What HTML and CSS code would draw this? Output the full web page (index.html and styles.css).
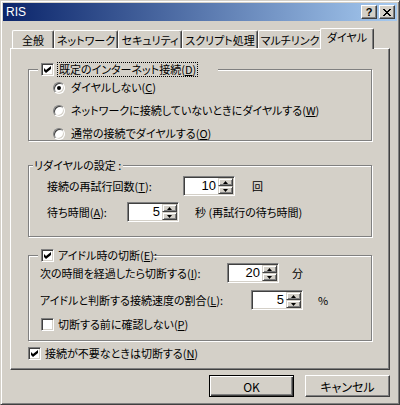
FILE: index.html
```html
<!DOCTYPE html>
<html lang="ja">
<head>
<meta charset="utf-8">
<title>RIS</title>
<link rel="stylesheet" href="styles.css">
</head>
<body>
<div class="window">
  <div class="titlebar">
    <span class="title">RIS</span>
    <div class="tbtns">
      <span class="tbtn help">?</span>
      <span class="tbtn close"><svg width="8" height="7" viewBox="0 0 8 7" shape-rendering="crispEdges"><path d="M0 0h2v1h1v1h2v-1h1v-1h2v1h-1v1h-1v1h-1v1h1v1h1v1h1v1h-2v-1h-1v-1h-2v1h-1v1h-2v-1h1v-1h1v-1h1v-1h-1v-1h-1v-1h-1z" fill="#000"/></svg></span>
    </div>
  </div>
  <div class="body">
    <div class="tabs">
      <div class="tab t1">全般</div>
      <div class="tab t2">ネットワーク</div>
      <div class="tab t3">セキュリティ</div>
      <div class="tab t4">スクリプト処理</div>
      <div class="tab t5">マルチリンク</div>
      <div class="tab t6 sel">ダイヤル</div>
    </div>
    <div class="panel">
      <div class="group g1">
        <div class="legend cblegend lg1">
          <span class="cb on"></span><span class="focus">既定のインターネット接続(<u>D</u>)</span>
        </div>
        <div class="rrow"><span class="rb on"></span><span>ダイヤルしない(<u>C</u>)</span></div>
        <div class="rrow"><span class="rb"></span><span>ネットワークに接続していないときにダイヤルする(<u>W</u>)</span></div>
        <div class="rrow"><span class="rb"></span><span>通常の接続でダイヤルする(<u>O</u>)</span></div>
      </div>

      <div class="group g2">
        <div class="legend lg2">リダイヤルの設定 :</div>
        <div class="frow r21">
          <span class="lbl l21">接続の再試行回数(<u>T</u>):</span>
          <span class="spin"><span class="val">10</span><span class="arrows"><span class="ab"><svg width="5" height="3" viewBox="0 0 5 3"><path d="M2.5 0L5 3H0z"/></svg></span><span class="ab"><svg width="5" height="3" viewBox="0 0 5 3"><path d="M0 0H5L2.5 3z"/></svg></span></span></span>
          <span class="unit u21">回</span>
        </div>
        <div class="frow r22">
          <span class="lbl l22">待ち時間(<u>A</u>):</span>
          <span class="spin"><span class="val">5</span><span class="arrows"><span class="ab"><svg width="5" height="3" viewBox="0 0 5 3"><path d="M2.5 0L5 3H0z"/></svg></span><span class="ab"><svg width="5" height="3" viewBox="0 0 5 3"><path d="M0 0H5L2.5 3z"/></svg></span></span></span>
          <span class="unit u22">秒 (再試行の待ち時間)</span>
        </div>
      </div>

      <div class="group g3">
        <div class="legend cblegend lg3">
          <span class="cb on"></span><span class="ltext">アイドル時の切断(<u>E</u>):</span>
        </div>
        <div class="frow r31">
          <span class="lbl l31">次の時間を経過したら切断する(<u>I</u>):</span>
          <span class="spin"><span class="val">20</span><span class="arrows"><span class="ab"><svg width="5" height="3" viewBox="0 0 5 3"><path d="M2.5 0L5 3H0z"/></svg></span><span class="ab"><svg width="5" height="3" viewBox="0 0 5 3"><path d="M0 0H5L2.5 3z"/></svg></span></span></span>
          <span class="unit u31">分</span>
        </div>
        <div class="frow r32">
          <span class="lbl l32">アイドルと判断する接続速度の割合(<u>L</u>):</span>
          <span class="spin"><span class="val">5</span><span class="arrows"><span class="ab"><svg width="5" height="3" viewBox="0 0 5 3"><path d="M2.5 0L5 3H0z"/></svg></span><span class="ab"><svg width="5" height="3" viewBox="0 0 5 3"><path d="M0 0H5L2.5 3z"/></svg></span></span></span>
          <span class="unit u32">%</span>
        </div>
        <div class="crow r33"><span class="cb"></span><span>切断する前に確認しない(<u>P</u>)</span></div>
      </div>

      <div class="crow last"><span class="cb on"></span><span>接続が不要なときは切断する(<u>N</u>)</span></div>
    </div>
    <div class="buttons">
      <div class="btn default">OK</div>
      <div class="btn">キャンセル</div>
    </div>
  </div>
</div>
</body>
</html>
```
FILE: styles.css
```css
* { box-sizing: border-box; }
html, body { margin: 0; padding: 0; }
body {
  width: 400px; height: 405px; overflow: hidden;
  background: #d4d0c8;
  font-family: "Noto Sans CJK JP", "Noto Sans", sans-serif;
  font-size: 11px; line-height: 13px; color: #000;
  font-feature-settings: "palt";
}
u { text-decoration: underline; text-underline-offset: 1px; }

.window {
  width: 400px; height: 405px;
  border: 1px solid; border-color: #d4d0c8 #404040 #404040 #d4d0c8;
  box-shadow: inset 1px 1px #fff, inset -1px -1px #808080;
  padding: 2px;
  display: flex; flex-direction: column;
}
.titlebar {
  height: 18px; flex: none;
  background: linear-gradient(to right, #0a246a, #a6caf0);
  display: flex; align-items: center; justify-content: space-between;
  padding: 0 2px 0 3px;
}
.title { color: #fff; font-family: "Liberation Sans", sans-serif; font-size: 12px; }
.tbtns { display: flex; gap: 2px; }
.tbtn {
  width: 16px; height: 14px;
  background: #d4d0c8;
  border: 1px solid; border-color: #fff #404040 #404040 #fff;
  box-shadow: inset -1px -1px #808080;
  display: flex; align-items: center; justify-content: center;
}
.help { font-family: "Liberation Sans", sans-serif; font-weight: bold; font-size: 11px; line-height: 12px; }

.body { flex: 1; padding: 7px 7px 5px 7px; display: flex; flex-direction: column; }
.tabs { height: 20px; display: flex; align-items: flex-end; padding-left: 2px; position: relative; z-index: 1; }
.tab {
  height: 18px; flex: none; white-space: nowrap;
  border: 1px solid; border-bottom: 0; border-color: #fff #404040 #fff #fff;
  box-shadow: inset -1px 0 #808080;
  border-radius: 2px 2px 0 0;
  display: flex; align-items: center; justify-content: center;
  padding-top: 1px;
}
.t1 { width: 42px; } .t2 { width: 64px; } .t3 { width: 64px; }
.t4 { width: 76px; } .t5 { width: 64px; } .t6 { width: 54px; }
.tab.sel {
  height: 21px; margin: 0 -2px -1px -2px; background: #d4d0c8;
  padding-top: 0; padding-bottom: 3px;
}

.panel {
  height: 322px; flex: none;
  border: 1px solid; border-color: #fff #404040 #404040 #fff;
  box-shadow: inset -1px -1px #808080;
  padding: 20px 0 0 17px;
}
.group {
  position: relative; width: 344px;
  border: 1px solid #808080;
  box-shadow: 1px 1px 0 #fff, inset 1px 1px 0 #fff;
}
.legend {
  position: absolute; top: -7px; height: 13px;
  background: #d4d0c8;
  display: flex; align-items: center; white-space: nowrap;
}
.lg1 { left: 9px; width: 180px; padding-left: 3px; }
.lg3 { left: 9px; width: 115px; padding-left: 3px; }
.lg2 { left: 4px; padding: 0 2px 0 1px; }
.cblegend .cb { margin-right: 4px; }
.focus { outline: 1px dotted #000; outline-offset: 0; padding: 0 1px; }

.g1 { height: 72px; padding: 11px 0 0 24px; display: flex; flex-direction: column; gap: 10px; }
.rrow { height: 13px; display: flex; align-items: center; white-space: nowrap; }
.rb {
  width: 12px; height: 12px; border-radius: 50%; flex: none;
  background: #fff; margin-right: 6px;
  border: 1px solid; border-color: #808080 #fff #fff #808080;
  box-shadow: inset 1px 1px #404040, inset -1px -1px #d4d0c8;
  position: relative;
}
.rb.on::after {
  content: ""; position: absolute; left: 3px; top: 3px;
  width: 4px; height: 4px; border-radius: 50%; background: #000;
}
.cb {
  width: 13px; height: 13px; flex: none; background: #fff;
  border: 1px solid; border-color: #808080 #fff #fff #808080;
  box-shadow: inset 1px 1px #404040, inset -1px -1px #d4d0c8;
  position: relative;
}
.cb.on::after {
  content: ""; position: absolute; left: 2px; top: 2px; width: 7px; height: 7px;
  background: #000;
  clip-path: polygon(0 28.6%, 28.6% 57%, 100% 0, 100% 42.8%, 28.6% 100%, 0 71.4%);
}

.g2 { margin-top: 24px; height: 72px; padding: 10px 0 0 18px; }
.frow { display: flex; align-items: center; white-space: nowrap; }
.r22 { margin-top: 6px; }
.l21 { width: 136px; } .l22 { width: 80px; }
.l31 { width: 187px; } .l32 { width: 211px; }
.u21 { margin-left: 17px; } .u22 { margin-left: 16px; }
.u31 { margin-left: 13px; } .u32 { margin-left: 15px; }

.spin {
  width: 52px; height: 20px; flex: none; background: #fff;
  border: 1px solid; border-color: #808080 #fff #fff #808080;
  box-shadow: inset 1px 1px #404040, inset -1px -1px #d4d0c8;
  padding: 1px;
  display: flex;
}
.val { flex: 1; text-align: right; padding-right: 2px; font-family: "Liberation Sans", sans-serif; font-size: 13px; line-height: 16px; }
.arrows { width: 15px; display: flex; flex-direction: column; }
.ab {
  height: 8px; background: #d4d0c8;
  border: 1px solid; border-color: #d4d0c8 #404040 #404040 #d4d0c8;
  box-shadow: inset 1px 1px #fff, inset -1px -1px #808080;
  display: flex; align-items: center; justify-content: center;
}
.ab svg { display: block; }

.g3 { margin-top: 18px; height: 86px; padding: 7px 0 0 11px; }
.r32 { margin-top: 7px; }
.crow { display: flex; align-items: center; white-space: nowrap; height: 13px; }
.crow .cb { margin-right: 4px; }
.r33 { margin-top: 8px; margin-left: 1px; }
.last { margin-top: 6px; }

.buttons { display: flex; justify-content: flex-end; gap: 11px; margin-top: 5px; }
.btn {
  width: 85px; height: 22px;
  border: 1px solid; border-color: #fff #404040 #404040 #fff;
  box-shadow: inset -1px -1px #808080;
  display: flex; align-items: center; justify-content: center;
  font-size: 12px;
}
.btn.default {
  border-color: #000;
  box-shadow: inset 1px 1px #fff, inset -1px -1px #404040, inset -2px -2px #808080;
}
```
